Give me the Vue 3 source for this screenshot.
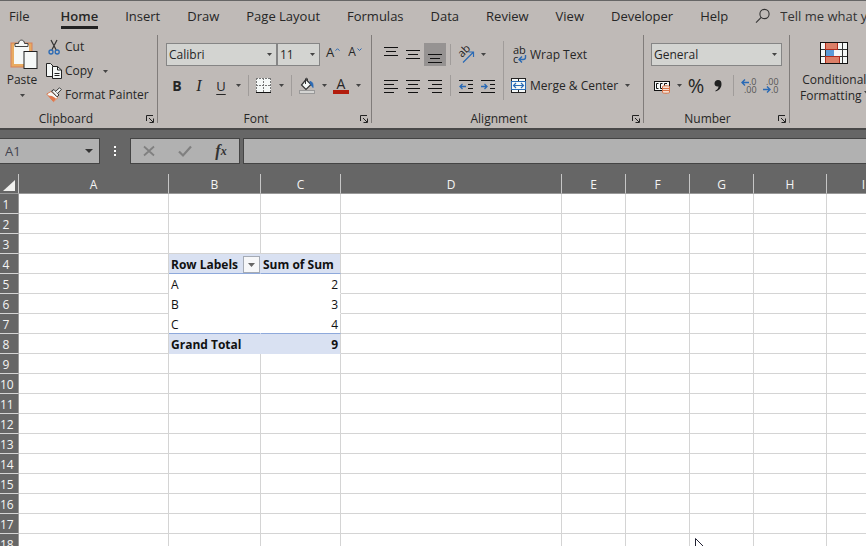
<template>
  <div class="app">
    <header class="ribbon">
      <nav class="tabs">
        <a
          v-for="tab in tabs"
          :key="tab"
          href="#"
          class="tab"
          :class="{ active: tab === activeTab }"
          @click.prevent="activeTab = tab"
        >{{ tab }}</a>
        <label class="search">
          <svg width="16" height="16" viewBox="0 0 16 16" fill="none" stroke="#333" stroke-width="1.1">
            <circle cx="9.5" cy="6" r="4.6" />
            <path d="M6.2 9.4L1 14.6" />
          </svg>
          <input type="text" placeholder="Tell me what you want" aria-label="Tell me what you want">
        </label>
      </nav>

      <div class="groups">
        <section class="group clipboard">
          <div class="group-body">
            <button class="big-button paste">
              <svg width="32" height="30" viewBox="-4 0 32 30">
                <rect x="1" y="4" width="21" height="24" fill="#e8ab62" stroke="#d8815a" />
                <path d="M4 6H19V25H4Z" fill="#f5f8f7" />
                <path d="M5 7V4.500H8.500C8.500 0 14.500 0 14.500 4.500H18V7.500H5Z" fill="#f5f8f7" stroke="#444" />
                <rect x="14" y="12.500" width="13" height="17" fill="#f5f8f7" stroke="#222" />
              </svg>
              <span>Paste</span>
              <svg class="caret" width="5" height="3" viewBox="0 0 5 3"><path d="M0 0H5L2.500 3Z" /></svg>
            </button>
            <div class="stack">
              <button class="line-button">
                <svg width="16" height="16" viewBox="0 0 16 16" fill="none">
                  <path d="M5 1L10.200 11M11 1L5.800 11" stroke="#333" stroke-width="1.200" />
                  <circle cx="5" cy="13" r="2" stroke="#2a6ab5" stroke-width="1.300" />
                  <circle cx="11.200" cy="13" r="2" stroke="#2a6ab5" stroke-width="1.300" />
                </svg>
                <span>Cut</span>
              </button>
              <button class="line-button">
                <svg width="16" height="16" viewBox="0 0 16 16" fill="#f5f8f7" stroke="#222">
                  <path d="M7 13.500H.5V.5H4.500L7 3" />
                  <path d="M6.500 3.500H11.500L15.500 7V15.500H6.500Z" />
                  <path d="M11.500 3.500V7H15.500M8.500 10.500H13.500M8.500 12.500H13.500" fill="none" />
                </svg>
                <span>Copy</span>
                <svg class="caret copy-caret" width="5" height="3" viewBox="0 0 5 3"><path d="M0 0H5L2.500 3Z" /></svg>
              </button>
              <button class="line-button">
                <svg width="16" height="16" viewBox="0 0 16 16">
                  <path d="M.7 7L5 4.500L12 10.500L7.500 14.700Z" fill="#f5f8f7" stroke="#d8815a" />
                  <path d="M2 8.500L6 9L10 11.500L7.500 14.700Z" fill="#e0784d" />
                  <path d="M5.500 4L8 2.500L13 8L11 9.800Z" fill="#f5f8f7" stroke="#333" />
                  <path d="M9.500 4.500L13.500 .8L15.300 2.600L11.500 6.400" fill="#f5f8f7" stroke="#333" />
                </svg>
                <span>Format Painter</span>
              </button>
            </div>
          </div>
          <footer class="group-footer">
            <span>Clipboard</span>
            <button class="launcher" aria-label="Clipboard settings"><svg width="8" height="8" viewBox="0 0 8 8"><path d="M.5 6V.5H7" /><path d="M3 3L7 7M7.500 3.500V7.500H3.500" /></svg></button>
          </footer>
        </section>

        <section class="group font">
          <div class="group-body rows">
            <div class="tool-row">
              <div class="dropdown font-name">
                <select v-model="fontName" aria-label="Font"><option>Calibri</option><option>Arial</option></select>
                <svg class="caret" width="5" height="3" viewBox="0 0 5 3"><path d="M0 0H5L2.500 3Z" /></svg>
              </div>
              <div class="dropdown font-size">
                <select v-model="fontSize" aria-label="Font size"><option>11</option><option>12</option></select>
                <svg class="caret" width="5" height="3" viewBox="0 0 5 3"><path d="M0 0H5L2.500 3Z" /></svg>
              </div>
              <button class="tool grow" aria-label="Increase font size">
                <span>A</span>
                <svg width="5" height="3" viewBox="0 0 5 3"><path d="M.5 2.700L2.500 .7L4.500 2.700" /></svg>
              </button>
              <button class="tool grow small" aria-label="Decrease font size">
                <span>A</span>
                <svg width="5" height="3" viewBox="0 0 5 3"><path d="M.5 .5L2.500 2.500L4.500 .5" /></svg>
              </button>
            </div>
            <div class="tool-row">
              <button class="tool bold">B</button>
              <button class="tool italic">I</button>
              <button class="tool underline">U</button>
              <button class="drop" aria-label="Underline options"><svg class="caret" width="5" height="3" viewBox="0 0 5 3"><path d="M0 0H5L2.500 3Z" /></svg></button>
              <i class="sep"></i>
              <button class="tool" aria-label="Borders">
                <svg width="16" height="16" viewBox="0 0 16 16" fill="none">
                  <rect width="15" height="15" fill="#f5f8f7" />
                  <path d="M0 .5H15M.5 0V14M14.500 0V14M7.500 0V14M0 7.500H15" stroke="#777" stroke-dasharray="2 1" />
                  <path d="M0 14.500H15" stroke="#111" />
                </svg>
              </button>
              <button class="drop" aria-label="Border options"><svg class="caret" width="5" height="3" viewBox="0 0 5 3"><path d="M0 0H5L2.500 3Z" /></svg></button>
              <i class="sep"></i>
              <button class="tool" aria-label="Fill color">
                <svg width="16" height="16" viewBox="0 0 16 16">
                  <path d="M7 1.500L12 6.500L7 11.500L2.500 7Z" fill="#f5f8f7" stroke="#333" stroke-width="1.200" />
                  <path d="M6.500 6V1C6.500 0 8.500 0 8.500 1V3" fill="none" stroke="#333" />
                  <path d="M11 3.500C14 4 14 6 14 9.500L11.500 6Z" fill="#2a6ab5" stroke="#2a6ab5" />
                  <rect x=".5" y="12.500" width="15" height="3" fill="#d4d4d2" stroke="#999" />
                </svg>
              </button>
              <button class="drop" aria-label="Fill color options"><svg class="caret" width="5" height="3" viewBox="0 0 5 3"><path d="M0 0H5L2.500 3Z" /></svg></button>
              <button class="tool font-color">A</button>
              <button class="drop" aria-label="Font color options"><svg class="caret" width="5" height="3" viewBox="0 0 5 3"><path d="M0 0H5L2.500 3Z" /></svg></button>
            </div>
          </div>
          <footer class="group-footer">
            <span>Font</span>
            <button class="launcher" aria-label="Font settings"><svg width="8" height="8" viewBox="0 0 8 8"><path d="M.5 6V.5H7" /><path d="M3 3L7 7M7.500 3.500V7.500H3.500" /></svg></button>
          </footer>
        </section>

        <section class="group alignment">
          <div class="group-body">
            <div class="rows">
              <div class="tool-row">
                <button
                  v-for="icon in verticalIcons"
                  :key="icon.name"
                  class="tool"
                  :class="{ pressed: icon.name === vertical }"
                  :aria-label="icon.name"
                  @click="vertical = icon.name"
                >
                  <svg width="14" height="18" viewBox="0 0 14 18"><path :d="icon.path" stroke="#111" /></svg>
                </button>
                <i class="sep"></i>
                <button class="tool" aria-label="Orientation">
                  <svg width="18" height="18" viewBox="0 0 18 18">
                    <text x="0" y="0" transform="translate(5 12) rotate(-45)" font-size="11" fill="#222">ab</text>
                    <path d="M6 16.500L16 6.500M11.500 6H16.500V11" fill="none" stroke="#2a6ab5" stroke-width="1.200" />
                  </svg>
                </button>
                <button class="drop" aria-label="Orientation options"><svg class="caret" width="5" height="3" viewBox="0 0 5 3"><path d="M0 0H5L2.500 3Z" /></svg></button>
              </div>
              <div class="tool-row">
                <button v-for="icon in horizontalIcons" :key="icon.name" class="tool" :aria-label="icon.name">
                  <svg width="14" height="14" viewBox="0 0 14 14"><path :d="icon.path" stroke="#111" /></svg>
                </button>
                <i class="sep"></i>
                <button class="tool" aria-label="Decrease indent">
                  <svg width="14" height="14" viewBox="0 0 14 14" fill="none">
                    <path d="M0 1.500H14M9 5.500H14M9 9.500H14M0 13.500H14" stroke="#111" />
                    <path d="M7 7.500H1M3.500 5L1 7.500L3.500 10" stroke="#2a6ab5" stroke-width="1.300" />
                  </svg>
                </button>
                <button class="tool" aria-label="Increase indent">
                  <svg width="14" height="14" viewBox="0 0 14 14" fill="none">
                    <path d="M0 1.500H14M9 5.500H14M9 9.500H14M0 13.500H14" stroke="#111" />
                    <path d="M0 7.500H6M3.500 5L6 7.500L3.500 10" stroke="#2a6ab5" stroke-width="1.300" />
                  </svg>
                </button>
              </div>
            </div>
            <i class="sep tall"></i>
            <div class="rows wrap-column">
              <button class="line-button">
                <svg width="16" height="18" viewBox="0 0 16 18">
                  <text font-size="11" fill="#222"><tspan x="2" y="8">ab</tspan><tspan x="2" y="17">c</tspan></text>
                  <path d="M14.500 9V11.500C14.500 13 13.500 13.500 12 13.500H8.500M11 10.500L8 13.500L11 16.500" fill="none" stroke="#2a6ab5" stroke-width="1.400" />
                </svg>
                <span>Wrap Text</span>
              </button>
              <button class="line-button">
                <svg width="16" height="16" viewBox="0 0 16 16" fill="none">
                  <rect x=".5" y=".5" width="14" height="14" fill="#f5f8f7" stroke="#222" />
                  <path d="M7.500 0V3M7.500 12V15" stroke="#222" />
                  <rect x=".5" y="3.500" width="14" height="8" fill="#f5f8f7" stroke="#2a6ab5" />
                  <path d="M2.500 7.500H12.500M5 5L2.500 7.500L5 10M10 5L12.500 7.500L10 10" stroke="#2a6ab5" stroke-width="1.200" />
                </svg>
                <span>Merge &amp; Center</span>
                <svg class="caret merge-caret" width="5" height="3" viewBox="0 0 5 3"><path d="M0 0H5L2.500 3Z" /></svg>
              </button>
            </div>
          </div>
          <footer class="group-footer">
            <span>Alignment</span>
            <button class="launcher" aria-label="Alignment settings"><svg width="8" height="8" viewBox="0 0 8 8"><path d="M.5 6V.5H7" /><path d="M3 3L7 7M7.500 3.500V7.500H3.500" /></svg></button>
          </footer>
        </section>

        <section class="group number">
          <div class="group-body rows">
            <div class="tool-row">
              <div class="dropdown format">
                <select v-model="numberFormat" aria-label="Number format"><option>General</option><option>Number</option></select>
                <svg class="caret" width="5" height="3" viewBox="0 0 5 3"><path d="M0 0H5L2.500 3Z" /></svg>
              </div>
            </div>
            <div class="tool-row">
              <button class="tool" aria-label="Accounting format">
                <svg width="18" height="16" viewBox="0 0 18 16" fill="none">
                  <rect x="1.500" y="3.500" width="15" height="9" fill="#f5f8f7" stroke="#111" />
                  <path d="M5.500 5.500H3.500V10.500H5.500M9.500 5.500H7.500V10.500H9.500M14 5.500H11.500V8" stroke="#111" />
                  <path d="M9.500 8.500C9.500 7.500 16.500 7.500 16.500 8.500V14.500C16.500 15.500 9.500 15.500 9.500 14.500Z" fill="#f3dfd2" stroke="#d8754a" />
                  <path d="M9.500 10.500H16.500M9.500 12.500H16.500" stroke="#d8754a" />
                </svg>
              </button>
              <button class="drop" aria-label="Accounting options"><svg class="caret" width="5" height="3" viewBox="0 0 5 3"><path d="M0 0H5L2.500 3Z" /></svg></button>
              <button class="tool percent">%</button>
              <button class="tool" aria-label="Comma style">
                <svg width="8" height="14" viewBox="0 0 8 14"><path d="M4 1C6.500 1 7.500 2.500 7.500 5C7.500 9 5 11.500 1.500 12.500V11.500C3.500 10.500 4.500 9 4.500 7.500C2 8 .5 6.500 .5 4.500C.5 2.500 2 1 4 1Z" fill="#222" /></svg>
              </button>
              <i class="sep"></i>
              <button class="tool" aria-label="Increase decimal">
                <svg width="16" height="18" viewBox="0 0 16 18" fill="none">
                  <text font-size="9" fill="#555"><tspan x="8" y="8">.0</tspan><tspan x="3" y="16">.00</tspan></text>
                  <path d="M8 5.500H1M4 2.500L1 5.500L4 8.500" stroke="#2a6ab5" stroke-width="1.400" />
                </svg>
              </button>
              <button class="tool" aria-label="Decrease decimal">
                <svg width="16" height="18" viewBox="0 0 16 18" fill="none">
                  <text font-size="9" fill="#555"><tspan x="3" y="8">.00</tspan><tspan x="8" y="16">.0</tspan></text>
                  <path d="M0 12.500H7M4 9.500L7 12.500L4 15.500" stroke="#2a6ab5" stroke-width="1.400" />
                </svg>
              </button>
            </div>
          </div>
          <footer class="group-footer">
            <span>Number</span>
            <button class="launcher" aria-label="Number settings"><svg width="8" height="8" viewBox="0 0 8 8"><path d="M.5 6V.5H7" /><path d="M3 3L7 7M7.500 3.500V7.500H3.500" /></svg></button>
          </footer>
        </section>

        <section class="group styles">
          <button class="big-button conditional">
            <svg width="28" height="22" viewBox="0 0 28 22" fill="none">
              <rect x=".5" y=".5" width="27" height="21" fill="#f5f8f7" />
              <path d="M.5 7.500H27.500M.5 14.500H27.500M5.500 0V22M17.500 0V7M22.500 0V22" stroke="#333" />
              <rect x="5.500" y=".5" width="12" height="7" fill="#dc7f67" stroke="#b02b1b" />
              <rect x="6" y="8" width="8" height="6" fill="#5b9bd8" />
              <rect x="5.500" y="14.500" width="14" height="7" fill="#dc7f67" stroke="#b02b1b" />
              <rect x=".5" y=".5" width="27" height="21" stroke="#111" />
            </svg>
            <span>Conditional</span>
            <span class="with-caret">Formatting <svg class="caret" width="5" height="3" viewBox="0 0 5 3"><path d="M0 0H5L2.500 3Z" /></svg></span>
          </button>
        </section>
      </div>
    </header>

    <div class="formula-bar">
      <div class="name-box">
        <input v-model="cellName" type="text" aria-label="Name box">
        <svg width="8" height="4" viewBox="0 0 8 4"><path d="M0 0H8L4 4Z" fill="#333" /></svg>
      </div>
      <svg class="dots" width="2" height="10" viewBox="0 0 2 10" fill="#fff">
        <path d="M0 0H2V2H0ZM0 4H2V6H0ZM0 8H2V10H0Z" />
      </svg>
      <div class="formula-actions">
        <button aria-label="Cancel">
          <svg width="12" height="12" viewBox="0 0 12 12"><path d="M1 1.500L11 10.500M11 1.500L1 10.500" stroke="#808080" stroke-width="1.800" /></svg>
        </button>
        <button aria-label="Enter">
          <svg width="14" height="12" viewBox="0 0 14 12" fill="none"><path d="M1 6.500L5 10.500L13 1.500" stroke="#808080" stroke-width="2.200" /></svg>
        </button>
        <button class="fx">f<sub>x</sub></button>
      </div>
      <input v-model="formula" class="formula" type="text" aria-label="Formula">
    </div>

    <main class="sheet">
      <table>
        <colgroup>
          <col class="col-index">
          <col v-for="col in columns" :key="col" :class="'col-' + col.toLowerCase()">
        </colgroup>
        <thead>
          <tr>
            <th class="corner">
              <svg width="12" height="11" viewBox="0 0 12 11"><path d="M12 0V11H0Z" fill="#f1f1ef" /></svg>
            </th>
            <th v-for="col in columns" :key="col">{{ col }}</th>
          </tr>
        </thead>
        <tbody>
          <tr v-for="row in rowCount" :key="row">
            <th>{{ row }}</th>
            <td v-for="col in columns" :key="col" :class="cellClass(col, row)">
              <div v-if="col + row === 'B4'" class="filter-cell">
                <span>{{ cells.B4 }}</span>
                <button class="filter" aria-label="Filter row labels">
                  <svg width="7" height="4" viewBox="0 0 7 4"><path d="M0 0H7L3.500 4Z" fill="#666" /></svg>
                </button>
              </div>
              <template v-else>{{ cells[col + row] }}</template>
            </td>
          </tr>
        </tbody>
      </table>
      <svg class="pointer" width="12" height="18" viewBox="0 0 12 18">
        <path d="M.5 .5V15L4 11.500L6.500 17L8.500 16L6 10.500H10.500Z" fill="#fff" stroke="#223" />
      </svg>
    </main>
  </div>
</template>

<script setup>
import { ref } from 'vue';

const tabs = ['File', 'Home', 'Insert', 'Draw', 'Page Layout', 'Formulas', 'Data', 'Review', 'View', 'Developer', 'Help'];
const activeTab = ref('Home');
const fontName = ref('Calibri');
const fontSize = ref('11');
const numberFormat = ref('General');
const vertical = ref('Bottom align');
const cellName = ref('A1');
const formula = ref('');

const verticalIcons = [
  { name: 'Top align', path: 'M0 1.500H14M2 5.500H12M0 9.500H14' },
  { name: 'Middle align', path: 'M0 4.500H14M2 8.500H12M0 12.500H14' },
  { name: 'Bottom align', path: 'M0 8.500H14M2 12.500H12M0 16.500H14' },
];
const horizontalIcons = [
  { name: 'Align left', path: 'M0 1.500H14M0 5.500H10M0 9.500H14M0 13.500H10' },
  { name: 'Center', path: 'M0 1.500H14M2 5.500H12M0 9.500H14M2 13.500H12' },
  { name: 'Align right', path: 'M0 1.500H14M4 5.500H14M0 9.500H14M4 13.500H14' },
];

const columns = ['A', 'B', 'C', 'D', 'E', 'F', 'G', 'H', 'I'];
const rowCount = 18;

// pivot table contents
const cells = {
  B4: 'Row Labels',
  C4: 'Sum of Sum',
  B5: 'A',
  C5: 2,
  B6: 'B',
  C6: 3,
  B7: 'C',
  C7: 4,
  B8: 'Grand Total',
  C8: 9,
};

const cellClass = (col, row) => {
  const inPivot = (col === 'B' || col === 'C') && row >= 4 && row <= 8;
  return {
    pivot: inPivot,
    total: inPivot && (row === 4 || row === 8),
    ruled: inPivot && (row === 4 || row === 7),
    'pivot-last': inPivot && col === 'C',
    numeric: typeof cells[col + row] === 'number',
  };
};
</script>

<style>
body {
  margin: 0;
}
</style>

<style scoped>
.app {
  display: flex;
  flex-direction: column;
  height: 100vh;
  overflow: hidden;
  background: #666;
  color: #262626;
  font-family: "Open Sans", "Noto Sans", sans-serif;
  font-size: 12px;
  line-height: 16px;
}

button,
input,
select {
  margin: 0;
  padding: 0;
  border: 0;
  border-radius: 0;
  background: none;
  color: inherit;
  font: inherit;
}

svg {
  flex: none;
  display: block;
  overflow: visible;
}

.caret {
  fill: #444;
}

.ribbon {
  border-top: 1px solid #666;
  border-bottom: 2px solid #484848;
  background: #bfbab7;
}

.tabs {
  display: flex;
  gap: 27px;
  height: 34px;
  padding-left: 9px;
  box-sizing: border-box;
  font-size: 13px;
  white-space: nowrap;
}

.tab {
  height: 16px;
  padding: 7px 0 2px;
  color: inherit;
  text-decoration: none;
}

.tab:first-child {
  margin-right: 4px;
}

.tab.active {
  border-bottom: 3px solid #222;
  font-weight: 600;
}

.search {
  flex: 1;
  display: flex;
  gap: 9px;
  min-width: 0;
  height: 16px;
  padding-top: 7px;
}

.search input {
  flex: 1;
  min-width: 0;
  outline: none;
}

.search input::placeholder {
  color: #333;
  opacity: 1;
}

.groups {
  display: flex;
  height: 93px;
  overflow: hidden;
}

.group {
  flex: none;
  display: flex;
  flex-direction: column;
  justify-content: space-between;
  height: 88px;
  box-sizing: border-box;
  border-right: 1px solid #807c7a;
}

.clipboard {
  width: 158px;
}

.font {
  width: 214px;
  padding-left: 8px;
}

.alignment {
  width: 272px;
  padding-left: 8px;
}

.number {
  width: 146px;
  padding-left: 7px;
}

.styles {
  align-items: flex-start;
  width: 90px;
  padding-left: 10px;
  border-right: 0;
}

.group-body {
  display: flex;
  height: 76px;
}

.rows {
  display: flex;
  flex-direction: column;
  gap: 8px;
  padding-top: 8px;
  box-sizing: border-box;
}

.alignment .group-body {
  align-items: flex-start;
}

.tool-row {
  display: flex;
  align-items: center;
  height: 23px;
}

.group-footer {
  display: flex;
  height: 8px;
  padding-right: 3px;
  line-height: 8px;
}

.group-footer span {
  flex: 1;
  padding-right: 14px;
  text-align: center;
}

.launcher {
  width: 8px;
  height: 8px;
}

.launcher svg {
  fill: none;
  stroke: #222;
}

.big-button {
  display: flex;
  flex-direction: column;
  align-items: center;
}

.paste {
  width: 44px;
  padding-top: 4px;
  gap: 3px;
}

.paste .caret {
  margin-top: 3px;
}

.conditional {
  padding-top: 7px;
}

.conditional svg:first-child {
  margin-bottom: 8px;
}

.with-caret {
  display: flex;
  align-items: center;
  gap: 2px;
}

.stack {
  padding-left: 2px;
}

.line-button {
  display: flex;
  align-items: center;
  gap: 3px;
  height: 24px;
  white-space: nowrap;
}

.copy-caret {
  margin-left: 7px;
}

.merge-caret {
  margin-left: 4px;
}

.wrap-column .line-button {
  height: 23px;
}

.dropdown {
  display: grid;
  align-items: center;
}

.dropdown select,
.dropdown .caret {
  grid-area: 1 / 1;
}

.dropdown .caret {
  justify-self: end;
  margin-right: 5px;
  pointer-events: none;
}

.dropdown select {
  width: 100%;
  height: 23px;
  padding-left: 2px;
  border: 1px solid #858585;
  background: #d3d4d1;
  appearance: none;
}

.font-name {
  width: 111px;
}

.font-size {
  width: 43px;
}

.format {
  width: 131px;
}

.tool {
  flex: none;
  display: flex;
  align-items: center;
  justify-content: center;
  width: 22px;
  height: 22px;
}

.drop {
  display: flex;
  align-items: center;
  justify-content: center;
  width: 12px;
  height: 22px;
}

.pressed {
  height: 23px;
  background: #969392;
}

.sep {
  flex: none;
  width: 1px;
  height: 21px;
  margin: 0 4px;
  background: #a09c9a;
}

.sep.tall {
  height: 59px;
  margin-top: 6px;
}

.wrap-column {
  padding-left: 3px;
}

.grow {
  align-items: flex-start;
  gap: 1px;
  font-size: 13px;
}

.grow:nth-of-type(1) {
  margin-left: 2px;
}

.grow svg {
  margin-top: 4px;
  fill: none;
  stroke: #2a6ab5;
}

.grow.small span {
  font-size: 12px;
}

.bold {
  font-size: 14px;
  font-weight: 700;
}

.italic {
  font-family: "Liberation Serif", serif;
  font-size: 16px;
  font-style: italic;
}

.underline {
  font-size: 13px;
  text-decoration: underline;
  text-underline-offset: 3px;
}

.font-color {
  width: 16px;
  height: 16px;
  margin: 0 3px;
  box-sizing: border-box;
  border-bottom: 4px solid #b31d0d;
  font-size: 14px;
}

.percent {
  font-size: 20px;
}

.formula-bar {
  display: flex;
  align-items: center;
  height: 26px;
  padding: 8px 0 10px;
}

.name-box {
  display: flex;
  align-items: center;
  width: 100px;
  height: 26px;
  padding: 0 6px 0 5px;
  box-sizing: border-box;
  border: 1px solid #444;
  border-left: 0;
  background: #b1b1b1;
  color: #44444f;
  font-size: 13px;
}

.name-box input {
  flex: 1;
  min-width: 0;
  outline: none;
}

.dots {
  margin: 0 14px;
}

.formula-actions {
  display: flex;
  width: 110px;
  height: 26px;
  box-sizing: border-box;
  border: 1px solid #444;
  background: #b1b1b1;
}

.formula-actions button {
  flex: 1;
  display: flex;
  align-items: center;
  justify-content: center;
}

.formula-actions .fx {
  color: #333;
  font-family: "Liberation Serif", serif;
  font-size: 16px;
  font-style: italic;
  font-weight: 700;
}

.fx sub {
  font-size: 12px;
  line-height: 12px;
}

.formula {
  flex: 1;
  min-width: 0;
  height: 26px;
  margin-left: 3px;
  padding: 0 6px;
  box-sizing: border-box;
  border: 1px solid #444;
  border-right: 0;
  background: #b1b1b1;
  outline: none;
}

.sheet {
  position: relative;
  flex: 1;
  min-height: 0;
  overflow: hidden;
}

table {
  width: 901px;
  table-layout: fixed;
  border-spacing: 0;
  background: #fff;
  color: #111;
}

.col-index {
  width: 19px;
}

.col-a {
  width: 150px;
}

.col-b {
  width: 92px;
}

.col-c {
  width: 80px;
}

.col-d {
  width: 221px;
}

.col-e,
.col-f,
.col-g {
  width: 64px;
}

.col-h {
  width: 73px;
}

.col-i {
  width: 74px;
}

th,
td {
  height: 20px;
  padding: 2px 2px 0;
  box-sizing: border-box;
  border-right: 1px solid #d4d4d4;
  border-bottom: 1px solid #d4d4d4;
  line-height: 17px;
  white-space: nowrap;
}

th {
  background: #666;
  color: #f4f4f4;
  font-weight: 400;
}

thead th {
  border-right-color: #c6c6c6;
  border-bottom-color: #999;
}

tbody th {
  padding: 2px 6px 0 0;
  border-right-color: #999;
}

.corner {
  padding: 4px 3px 0 0;
}

.corner svg {
  margin-left: auto;
}

.pivot {
  border-color: #fff;
}

.pivot.total {
  border-color: #d9e1f2;
  background: #d9e1f2;
  font-weight: 700;
}

.pivot.pivot-last {
  border-right-color: #d4d4d4;
}

.pivot.ruled {
  border-bottom-color: #8ea9db;
}

.numeric {
  text-align: right;
}

.filter-cell {
  display: flex;
  align-items: center;
  justify-content: space-between;
  height: 17px;
}

.filter {
  display: flex;
  align-items: center;
  justify-content: center;
  width: 17px;
  height: 17px;
  box-sizing: border-box;
  margin-right: -2px;
  border: 1px solid #a5abb5;
  background: #f6f7f9;
}

.pointer {
  position: absolute;
  left: 695px;
  top: 364px;
}
</style>
